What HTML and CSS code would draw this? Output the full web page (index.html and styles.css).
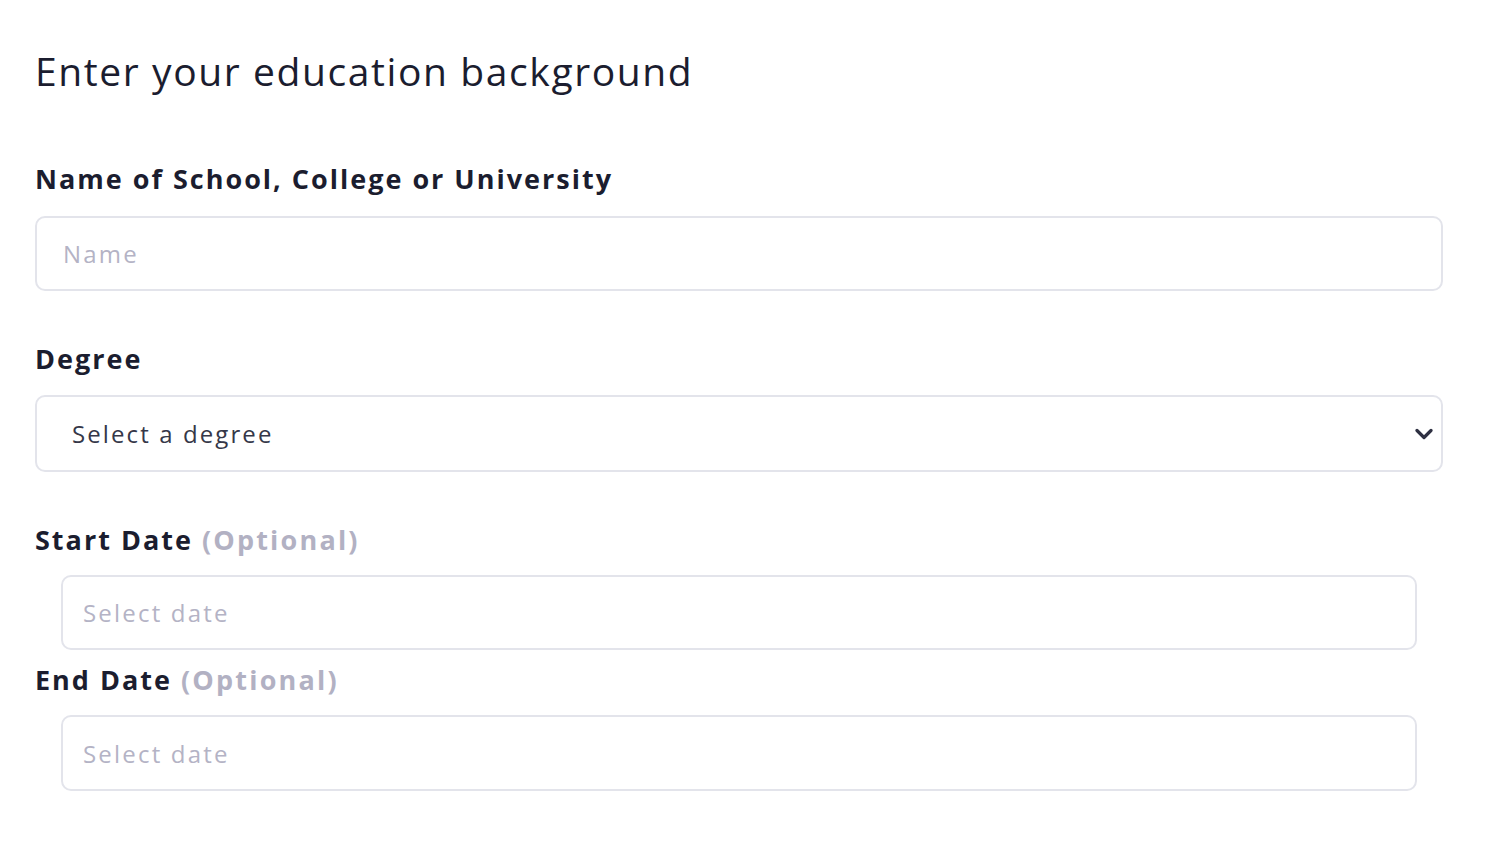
FILE: index.html
```html
<!DOCTYPE html>
<html lang="en">
<head>
<meta charset="utf-8">
<title>Education background</title>
<link rel="stylesheet" href="styles.css">
</head>
<body>
<main class="page">
  <h1 class="title">Enter your education background</h1>

  <div class="field">
    <label class="label" for="school">Name of School, College or University</label>
    <input id="school" class="input" type="text" placeholder="Name">
  </div>

  <div class="field">
    <label class="label" for="degree">Degree</label>
    <div class="select">
      <span class="select-text">Select a degree</span>
      <svg class="chevron" width="18" height="12" viewBox="0 0 18 12"><polyline points="2,2.5 9,9.5 16,2.5" fill="none" stroke="#2e3042" stroke-width="3.2" stroke-linecap="round" stroke-linejoin="round"/></svg>
    </div>
  </div>

  <div class="field date-field">
    <label class="label" for="start">Start Date <span class="optional">(Optional)</span></label>
    <div class="date-wrap">
      <input id="start" class="input date-input" type="text" placeholder="Select date">
    </div>
  </div>

  <div class="field date-field">
    <label class="label" for="end">End Date <span class="optional">(Optional)</span></label>
    <div class="date-wrap">
      <input id="end" class="input date-input tall" type="text" placeholder="Select date">
    </div>
  </div>
</main>
</body>
</html>
```
FILE: styles.css
```css
* { box-sizing: border-box; }
html, body { margin: 0; padding: 0; background: #ffffff; }
body { font-family: "Open Sans", "Noto Sans", sans-serif; color: #1b1d2f; }

.page {
  width: 1504px;
  padding: 47px 61px 0 35px;
}

.title {
  margin: 0 0 64px 0;
  font-size: 39px;
  line-height: 48px;
  font-weight: 400;
  letter-spacing: 1.6px;
  color: #1b1d2f;
}

.field { display: flex; flex-direction: column; margin-bottom: 48px; }
.field.date-field { margin-bottom: 10px; }

.label {
  display: block;
  font-size: 27px;
  line-height: 40px;
  font-weight: 700;
  letter-spacing: 2px;
  color: #1b1d2f;
  margin-bottom: 17px;
}
.field + .field .label { margin-bottom: 16px; }
.field.date-field .label { margin-bottom: 15px; }

.optional { color: #b2b1c3; font-weight: 700; letter-spacing: 2.2px; }

.input {
  display: block;
  width: 100%;
  height: 75px;
  border: 2px solid #e3e4eb;
  border-radius: 10px;
  padding: 0 26px;
  font-family: inherit;
  font-size: 24px;
  letter-spacing: 2.2px;
  color: #1b1d2f;
  background: #fff;
  outline: none;
}
.input::placeholder { color: #b4b3c5; }

.select {
  display: flex;
  align-items: center;
  justify-content: space-between;
  height: 77px;
  border: 2px solid #e3e4eb;
  border-radius: 10px;
  padding: 0 8px 0 35px;
  font-size: 24px;
  letter-spacing: 2.1px;
  color: #353748;
}
.select-text { line-height: 1; }

.date-wrap { padding: 0 26px; }
.date-input { padding: 0 20px; }
.date-input.tall { height: 76px; }
```
